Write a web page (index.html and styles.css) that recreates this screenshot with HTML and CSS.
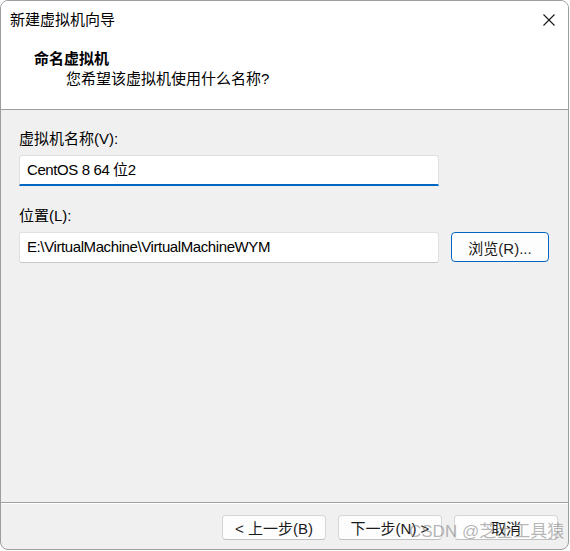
FILE: index.html
```html
<!DOCTYPE html>
<html lang="zh-CN">
<head>
<meta charset="utf-8">
<title>新建虚拟机向导</title>
<link rel="stylesheet" href="styles.css">
</head>
<body>
<div class="window">
  <div class="header">
    <div class="titlebar">
      <span class="title">新建虚拟机向导</span>
      <span class="close">
        <svg width="12" height="12" viewBox="0 0 12 12"><path d="M0.5 0.5 L11.5 11.5 M11.5 0.5 L0.5 11.5" stroke="#1a1a1a" stroke-width="1.1" fill="none"/></svg>
      </span>
    </div>
    <div class="heading">命名虚拟机</div>
    <div class="subheading">您希望该虚拟机使用什么名称?</div>
  </div>
  <div class="content">
    <div class="label">虚拟机名称(V):</div>
    <div class="field field-focus">CentOS 8 64 位2</div>
    <div class="label label-gap">位置(L):</div>
    <div class="row">
      <div class="field">E:\VirtualMachine\VirtualMachineWYM</div>
      <div class="btn btn-default">浏览(R)...</div>
    </div>
  </div>
  <div class="footer">
    <div class="btn">&lt; 上一步(B)</div>
    <div class="btn">下一步(N) &gt;</div>
    <div class="btn">取消</div>
  </div>
  <div class="watermark">CSDN @芝士工具猿</div>
</div>
</body>
</html>
```
FILE: styles.css
```css
html, body {
  margin: 0;
  padding: 0;
  background: #ffffff;
}
body {
  font-family: "Liberation Sans", "Noto Sans CJK SC", sans-serif;
  font-size: 15px;
  color: #000;
}
.window {
  position: relative;
  box-sizing: border-box;
  width: 569px;
  height: 550px;
  border: 1px solid #9d9d9d;
  border-radius: 8px;
  overflow: hidden;
  display: flex;
  flex-direction: column;
  background: #f0f0f0;
}
.header {
  background: #ffffff;
  border-bottom: 1px solid #a0a0a0;
  padding-bottom: 20px;
}
.titlebar {
  height: 37px;
  display: flex;
  align-items: center;
  justify-content: space-between;
  padding-left: 9px;
  padding-right: 13px;
}
.title {
  line-height: 20px;
}
.close {
  display: flex;
  width: 12px;
  height: 12px;
}
.heading {
  font-weight: bold;
  line-height: 20px;
  margin-top: 11px;
  padding-left: 33px;
}
.subheading {
  line-height: 20px;
  padding-left: 65px;
}
.content {
  flex: 1;
  padding: 19px 0 0 18px;
}
.label {
  line-height: 20px;
  margin-bottom: 6px;
}
.label-gap {
  margin-top: 20px;
}
.field {
  box-sizing: border-box;
  width: 420px;
  height: 31px;
  background: #ffffff;
  border: 1px solid #e0e0e0;
  border-bottom-color: #c8c8c8;
  border-radius: 3px;
  padding-left: 7px;
  line-height: 28px;
  letter-spacing: -0.4px;
  white-space: nowrap;
}
.field-focus {
  border-bottom: 2px solid #0067c0;
  border-radius: 3px 3px 0 0;
}
.row {
  display: flex;
  align-items: flex-start;
  gap: 12px;
}
.btn {
  box-sizing: border-box;
  width: 104px;
  height: 25px;
  border: 1px solid #d5d5d5;
  border-bottom-color: #c0c0c0;
  border-radius: 4px;
  background: #fdfdfd;
  display: flex;
  align-items: center;
  justify-content: center;
  color: #1b1b1b;
  white-space: nowrap;
}
.btn-default {
  width: 98px;
  height: 30px;
  border: 1px solid #0067c0;
}
.footer {
  border-top: 1px solid #a0a0a0;
  box-shadow: inset 0 1px 0 #ffffff;
  display: flex;
  justify-content: flex-end;
  gap: 12px;
  padding: 12px 10px 9px 0;
}
.watermark {
  position: absolute;
  left: 408px;
  top: 519px;
  font-size: 17px;
  line-height: 24px;
  color: rgba(120, 120, 120, 0.55);
  white-space: nowrap;
  pointer-events: none;
}
```
